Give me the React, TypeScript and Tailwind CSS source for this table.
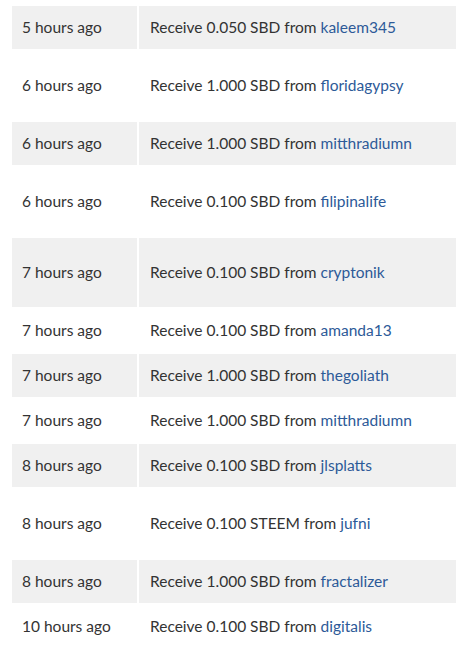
import React from "react";

type Row = { t: string; amt: string; from: string; h: string; gray: boolean };

const rows: Row[] = [
  { t: "5 hours ago", amt: "0.050 SBD", from: "kaleem345", h: "h-[43px]", gray: true },
  { t: "6 hours ago", amt: "1.000 SBD", from: "floridagypsy", h: "h-[73px]", gray: false },
  { t: "6 hours ago", amt: "1.000 SBD", from: "mitthradiumn", h: "h-[43px]", gray: true },
  { t: "6 hours ago", amt: "0.100 SBD", from: "filipinalife", h: "h-[73px]", gray: false },
  { t: "7 hours ago", amt: "0.100 SBD", from: "cryptonik", h: "h-[69px]", gray: true },
  { t: "7 hours ago", amt: "0.100 SBD", from: "amanda13", h: "h-[47px]", gray: false },
  { t: "7 hours ago", amt: "1.000 SBD", from: "thegoliath", h: "h-[43px]", gray: true },
  { t: "7 hours ago", amt: "1.000 SBD", from: "mitthradiumn", h: "h-[47px]", gray: false },
  { t: "8 hours ago", amt: "0.100 SBD", from: "jlsplatts", h: "h-[43px]", gray: true },
  { t: "8 hours ago", amt: "0.100 STEEM", from: "jufni", h: "h-[73px]", gray: false },
  { t: "8 hours ago", amt: "1.000 SBD", from: "fractalizer", h: "h-[43px]", gray: true },
  { t: "10 hours ago", amt: "0.100 SBD", from: "digitalis", h: "h-[47px]", gray: false },
];

export default function App() {
  return (
    <div
      className="w-[456px] h-[647px] overflow-hidden bg-white pt-[6px] pl-[12px] text-[15.5px] text-[#333333]"
      style={{ fontFamily: "Lato, 'Noto Sans', sans-serif" }}
    >
      <div className="flex flex-col">
        {rows.map((r, i) => (
          <div key={i} className={`flex gap-[2px] ${r.h}`}>
            <div
              className={`w-[125px] shrink-0 flex items-center pl-[10px] ${
                r.gray ? "bg-[#f0f0f0]" : "bg-white"
              }`}
            >
              {r.t}
            </div>
            <div
              className={`flex-1 flex items-center pl-[11px] whitespace-nowrap ${
                r.gray ? "bg-[#f0f0f0]" : "bg-white"
              }`}
            >
              Receive {r.amt} from&nbsp;
              <a className="text-[#2d5a98]" href="#">
                {r.from}
              </a>
            </div>
          </div>
        ))}
      </div>
    </div>
  );
}
